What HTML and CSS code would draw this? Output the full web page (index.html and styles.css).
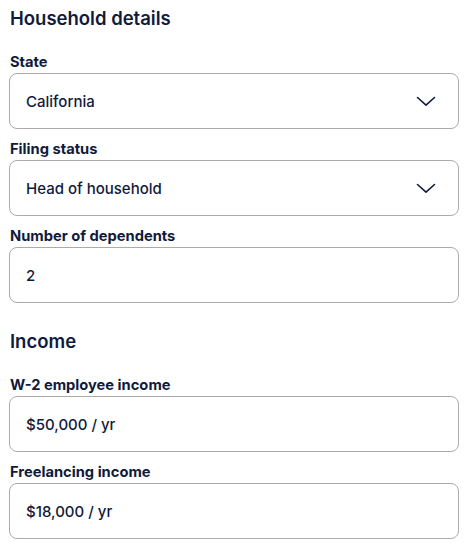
FILE: index.html
```html
<!DOCTYPE html>
<html>
<head>
<meta charset="utf-8">
<link rel="stylesheet" href="styles.css">
</head>
<body>
<div class="page">
  <section class="section">
    <h2 class="heading">Household details</h2>
    <div class="fields">
      <div class="field">
        <div class="label">State</div>
        <div class="box select"><span class="value">California</span>
          <svg class="chev" width="20" height="11" viewBox="0 0 20 11"><path d="M1.5 1.5 L10 9.2 L18.5 1.5" fill="none" stroke="#101a3c" stroke-width="1.6" stroke-linecap="round" stroke-linejoin="round"/></svg>
        </div>
      </div>
      <div class="field">
        <div class="label">Filing status</div>
        <div class="box select"><span class="value">Head of household</span>
          <svg class="chev" width="20" height="11" viewBox="0 0 20 11"><path d="M1.5 1.5 L10 9.2 L18.5 1.5" fill="none" stroke="#101a3c" stroke-width="1.6" stroke-linecap="round" stroke-linejoin="round"/></svg>
        </div>
      </div>
      <div class="field">
        <div class="label">Number of dependents</div>
        <div class="box"><span class="value">2</span></div>
      </div>
    </div>
  </section>
  <section class="section section-next">
    <h2 class="heading">Income</h2>
    <div class="fields">
      <div class="field">
        <div class="label">W-2 employee income</div>
        <div class="box"><span class="value">$50,000 / yr</span></div>
      </div>
      <div class="field">
        <div class="label">Freelancing income</div>
        <div class="box"><span class="value">$18,000 / yr</span></div>
      </div>
    </div>
  </section>
</div>
</body>
</html>
```
FILE: styles.css
```css
html, body {
  margin: 0;
  padding: 0;
  background: #ffffff;
}
body {
  font-family: Inter, "Noto Sans", "Liberation Sans", sans-serif;
  color: #101a3c;
}
.page {
  padding: 6px 12px 0 9px;
  width: 450px;
}
.section {
  display: flex;
  flex-direction: column;
  gap: 22px;
}
.section-next {
  margin-top: 26px;
}
.heading {
  margin: 0 0 0 1px;
  font-size: 18.5px;
  line-height: 24px;
  font-weight: 600;
}
.fields {
  display: flex;
  flex-direction: column;
  gap: 10px;
}
.field {
  display: flex;
  flex-direction: column;
  gap: 1px;
}
.label {
  font-size: 14.7px;
  line-height: 20px;
  font-weight: 700;
  padding-left: 1px;
}
.box {
  box-sizing: border-box;
  height: 56px;
  border: 1px solid #ababab;
  border-radius: 8px;
  display: flex;
  align-items: center;
  justify-content: space-between;
  padding: 0 22px 0 16px;
}
.value {
  font-size: 15px;
  font-weight: 500;
}
.chev {
  display: block;
}
```
